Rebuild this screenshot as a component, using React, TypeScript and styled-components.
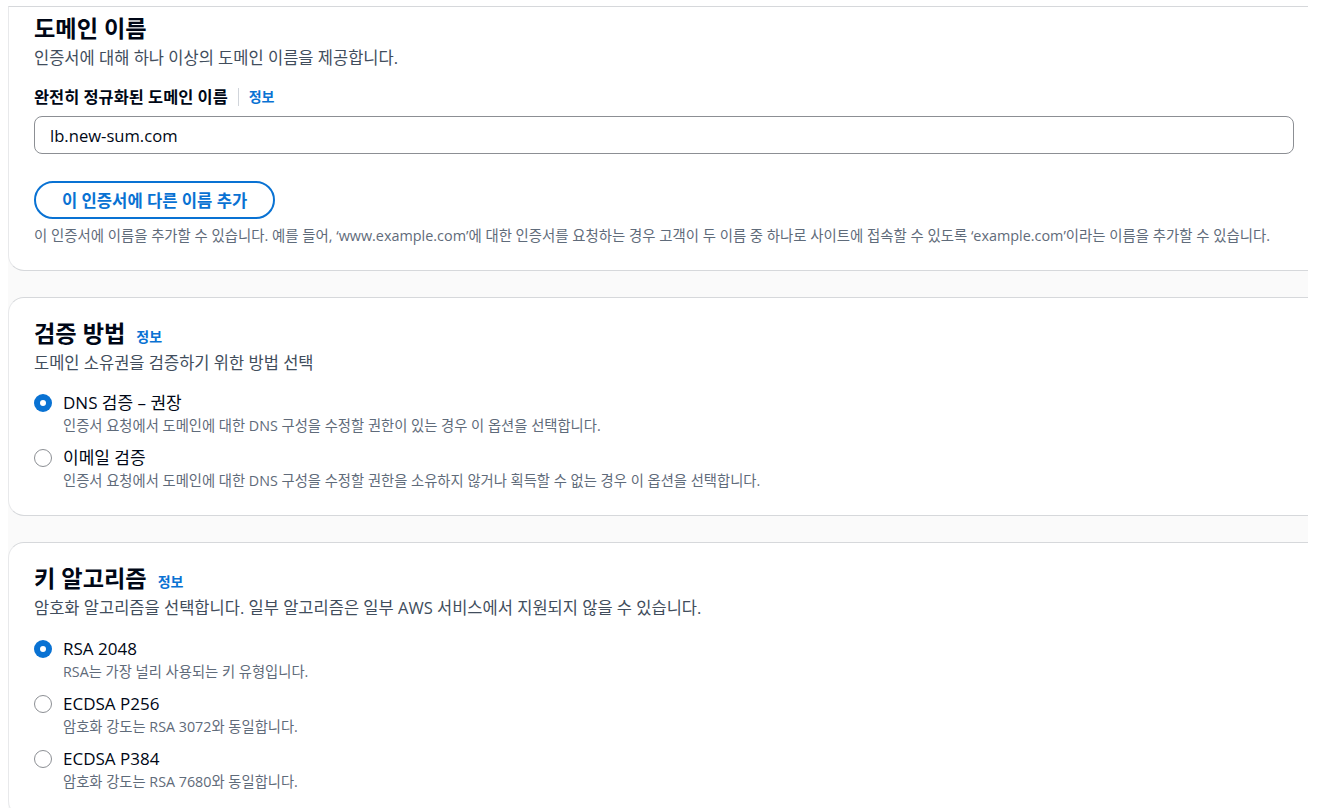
import React from "react";
import styled, { createGlobalStyle } from "styled-components";

const Global = createGlobalStyle`
  html, body { margin: 0; padding: 0; background: #ffffff; }
  body {
    font-family: "Open Sans", "Noto Sans CJK KR", sans-serif;
    color: #000716;
    font-feature-settings: "palt" 1;
    -webkit-font-smoothing: antialiased;
  }
  * { box-sizing: border-box; }
`;

const Page = styled.main`
  width: 1300px;
  height: 802px;
  margin: 6px 0 0 8px;
  background: #fafafa;
  display: flex;
  flex-direction: column;
  gap: 26px;
  overflow: hidden;
`;

const Card = styled.section<{ $flatTop?: boolean }>`
  background: #ffffff;
  border-top: 1px solid #d6d8db;
  border-bottom: 1px solid #d6d8db;
  border-left: 1px solid #e8e9eb;
  border-radius: ${(p) => (p.$flatTop ? "0 0 0 16px" : "16px 0 0 16px")};
  padding: ${(p) => (p.$flatTop ? "6px 15px 24px 25px" : "20px 15px 24px 25px")};
  display: flex;
  flex-direction: column;
  flex-shrink: 0;
`;

const HeaderRow = styled.div`
  display: flex;
  align-items: baseline;
  gap: 11px;
`;

const Heading = styled.h2`
  margin: 0;
  font-size: 23.2px;
  line-height: 30px;
  font-weight: 700;
  color: #000716;
`;

const InfoLink = styled.a`
  font-size: 14px;
  line-height: 20px;
  font-weight: 700;
  color: #0972d3;
  text-decoration: none;
`;

const Subtitle = styled.p`
  margin: 4px 0 0;
  font-size: 16.5px;
  line-height: 22px;
  color: #414d5c;
`;

const FieldLabel = styled.div`
  margin-top: 17px;
  display: flex;
  align-items: center;
  gap: 10px;
  font-size: 16.4px;
  line-height: 22px;
  font-weight: 700;
  color: #000716;
`;

const Divider = styled.span`
  width: 1px;
  height: 18px;
  background: #d1d5db;
`;

const Input = styled.input`
  margin-top: 8px;
  width: 1260px;
  height: 38px;
  border: 1px solid #8c8f94;
  border-radius: 8px;
  padding: 0 15px;
  font-family: inherit;
  font-size: 16.6px;
  color: #000716;
  background: #ffffff;
  outline: none;
`;

const OutlineButton = styled.button`
  margin-top: 27px;
  align-self: flex-start;
  height: 38px;
  padding: 0 26px;
  border: 2px solid #0972d3;
  border-radius: 20px;
  background: #ffffff;
  color: #0972d3;
  font-family: inherit;
  font-size: 16.6px;
  font-weight: 700;
`;

const HelpText = styled.p`
  margin: 7px 0 0;
  font-size: 14.4px;
  line-height: 20px;
  color: #5f6b7a;
  white-space: nowrap;
`;

const RadioGroup = styled.div<{ $top: number }>`
  margin-top: ${(p) => p.$top}px;
  display: flex;
  flex-direction: column;
  gap: 11px;
`;

const Option = styled.label`
  display: grid;
  grid-template-columns: 18px auto;
  column-gap: 11px;
  row-gap: 2px;
  align-items: center;
`;

const RadioDot = styled.span<{ $checked?: boolean }>`
  width: 18px;
  height: 18px;
  border-radius: 50%;
  position: relative;
  background: ${(p) => (p.$checked ? "#0972d3" : "#ffffff")};
  border: ${(p) => (p.$checked ? "none" : "1.5px solid #8c8f94")};
  &::after {
    content: "";
    display: ${(p) => (p.$checked ? "block" : "none")};
    position: absolute;
    left: 6px;
    top: 6px;
    width: 6px;
    height: 6px;
    border-radius: 50%;
    background: #ffffff;
  }
`;

const OptionLabel = styled.span`
  font-size: 17px;
  line-height: 22px;
  font-weight: 400;
  color: #000716;
`;

const OptionDesc = styled.span`
  grid-column: 2;
  font-size: 14.3px;
  line-height: 20px;
  color: #5f6b7a;
`;

type Opt = { label: string; desc: string; checked?: boolean };

const RadioList = ({ options, top }: { options: Opt[]; top: number }) => (
  <RadioGroup $top={top}>
    {options.map((o) => (
      <Option key={o.label}>
        <RadioDot $checked={o.checked} />
        <OptionLabel>{o.label}</OptionLabel>
        <OptionDesc>{o.desc}</OptionDesc>
      </Option>
    ))}
  </RadioGroup>
);

export default function App() {
  return (
    <>
      <Global />
      <Page>
        <Card $flatTop>
          <Heading>도메인 이름</Heading>
          <Subtitle>인증서에 대해 하나 이상의 도메인 이름을 제공합니다.</Subtitle>
          <FieldLabel>
            완전히 정규화된 도메인 이름
            <Divider />
            <InfoLink>정보</InfoLink>
          </FieldLabel>
          <Input defaultValue="lb.new-sum.com" />
          <OutlineButton>이 인증서에 다른 이름 추가</OutlineButton>
          <HelpText>
            이 인증서에 이름을 추가할 수 있습니다. 예를 들어, ‘www.example.com’에 대한 인증서를 요청하는 경우 고객이 두 이름 중 하나로 사이트에 접속할 수 있도록 ‘example.com’이라는 이름을 추가할 수 있습니다.
          </HelpText>
        </Card>
        <Card>
          <HeaderRow>
            <Heading>검증 방법</Heading>
            <InfoLink>정보</InfoLink>
          </HeaderRow>
          <Subtitle>도메인 소유권을 검증하기 위한 방법 선택</Subtitle>
          <RadioList
            top={18}
            options={[
              {
                label: "DNS 검증 – 권장",
                desc: "인증서 요청에서 도메인에 대한 DNS 구성을 수정할 권한이 있는 경우 이 옵션을 선택합니다.",
                checked: true,
              },
              {
                label: "이메일 검증",
                desc: "인증서 요청에서 도메인에 대한 DNS 구성을 수정할 권한을 소유하지 않거나 획득할 수 없는 경우 이 옵션을 선택합니다.",
              },
            ]}
          />
        </Card>
        <Card>
          <HeaderRow>
            <Heading>키 알고리즘</Heading>
            <InfoLink>정보</InfoLink>
          </HeaderRow>
          <Subtitle>암호화 알고리즘을 선택합니다. 일부 알고리즘은 일부 AWS 서비스에서 지원되지 않을 수 있습니다.</Subtitle>
          <RadioList
            top={19}
            options={[
              { label: "RSA 2048", desc: "RSA는 가장 널리 사용되는 키 유형입니다.", checked: true },
              { label: "ECDSA P256", desc: "암호화 강도는 RSA 3072와 동일합니다." },
              { label: "ECDSA P384", desc: "암호화 강도는 RSA 7680와 동일합니다." },
            ]}
          />
        </Card>
      </Page>
    </>
  );
}
